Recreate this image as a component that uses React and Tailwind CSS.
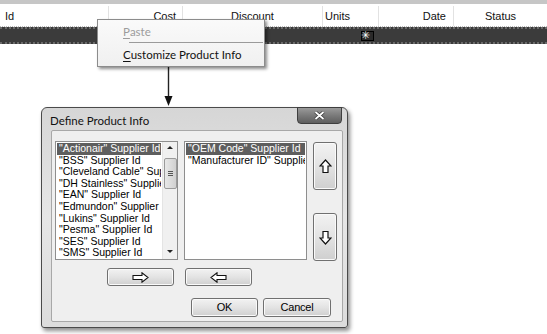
import React from 'react'

const leftItems = [
  '"Actionair" Supplier Id',
  '"BSS" Supplier Id',
  '"Cleveland Cable" Supplier Id',
  '"DH Stainless" Supplier Id',
  '"EAN" Supplier Id',
  '"Edmundon" Supplier Id',
  '"Lukins" Supplier Id',
  '"Pesma" Supplier Id',
  '"SES" Supplier Id',
  '"SMS" Supplier Id',
]

const rightItems = ['"OEM Code" Supplier Id', '"Manufacturer ID" Supplier Id']

const btn = 'flex items-center justify-center rounded-[3px] border border-[#707070] bg-gradient-to-b from-[#f2f2f2] via-[#e3e3e3] to-[#cfcfcf] shadow-[inset_0_0_0_1px_#fafafa]'

function ArrowUp({ down }) {
  return (
    <svg width="13" height="15" viewBox="0 0 13 15" className={down ? 'rotate-180' : ''}>
      <path d="M6.5 1 L12 7 L9 7 L9 13.5 L4 13.5 L4 7 L1 7 Z" fill="#fff" stroke="#111" strokeWidth="1.2" strokeLinejoin="miter" />
    </svg>
  )
}

function ArrowSide({ left }) {
  return (
    <svg width="17" height="11" viewBox="0 0 17 11" className={left ? 'rotate-180' : ''}>
      <path d="M1 3.5 H10 V0.8 L16 5.5 L10 10.2 V7.5 H1 Z" fill="#fff" stroke="#111" strokeWidth="1.1" />
    </svg>
  )
}

function ListBox({ items, scroll }) {
  return (
    <div className="relative h-[119px] w-[123px] overflow-hidden border border-[#8e8e8e] bg-white">
      <div className={`pt-[1px] pl-[1px] ${scroll ? 'pr-[16px]' : 'pr-[1px]'}`}>
        {items.map((t, i) => (
          <div
            key={t}
            className={`h-[11.6px] whitespace-nowrap overflow-hidden pl-[2px] text-[10.5px] leading-[11.6px] ${i === 0 ? 'bg-[#5e5e5e] text-white' : 'text-black'}`}
          >
            {t}
          </div>
        ))}
      </div>
      {scroll && (
        <div className="absolute right-0 top-0 flex h-full w-[15px] flex-col items-center bg-[#f0f0f0] border-l border-[#e4e4e4]">
          <div className="mt-[4px] h-0 w-0 border-x-[3px] border-b-[3px] border-x-transparent border-b-[#222]" />
          <div className="mt-[9px] flex h-[31px] w-[13px] flex-col items-center justify-center gap-[1px] rounded-[2px] border border-[#9a9a9a] bg-gradient-to-r from-[#e8e8e8] to-[#d0d0d0]">
            <div className="h-[1px] w-[5px] bg-[#555]" />
            <div className="h-[1px] w-[5px] bg-[#555]" />
            <div className="h-[1px] w-[5px] bg-[#555]" />
          </div>
          <div className="mt-auto mb-[6px] h-0 w-0 border-x-[3px] border-t-[3px] border-x-transparent border-t-[#222]" />
        </div>
      )}
    </div>
  )
}

export default function App() {
  return (
    <div className="relative h-[334px] w-[547px] overflow-hidden bg-white text-black" style={{ fontFamily: '"Liberation Sans", Arial, sans-serif' }}>
      {/* grid header */}
      <div className="h-[4px] bg-[#c6c6c6]" />
      <div className="flex h-[23px] pt-[2px] text-[11px] text-[#111] border-b border-dotted border-[#bbb]">
        <div className="flex w-[109px] items-center pl-[5px] border-r border-[#e2e2e2]">Id</div>
        <div className="flex w-[74px] items-center justify-end pr-[6px] border-r border-[#e2e2e2]">Cost</div>
        <div className="flex w-[140px] items-center justify-center border-r border-[#e2e2e2]">Discount</div>
        <div className="flex w-[56px] items-center pl-[2px] border-r border-[#e2e2e2]">Units</div>
        <div className="flex w-[75px] items-center justify-end pr-[7px] border-r border-[#e2e2e2]">Date</div>
        <div className="flex flex-1 items-center justify-center">Status</div>
      </div>
      <div className="relative h-[17px] bg-[#3b3b3b] border-y-2 border-dotted border-[#6a6a6a]">
        <div className="absolute left-[361px] top-[2px] h-[10px] w-[13px] border border-black bg-[#2a2a2a]">
          <span className="absolute left-[-1px] top-[-4px] text-[11px] leading-[14px] text-white">✳</span>
        </div>
      </div>

      {/* dialog */}
      <div className="relative ml-[41px] mt-[63px] h-[221px] w-[307px] rounded-t-[6px] rounded-b-[3px] border border-[#4a4a4a] bg-gradient-to-b from-[#d6d6d6] via-[#e6e6e6] to-[#dcdcdc] shadow-[2px_3px_4px_rgba(0,0,0,0.45)]">
        <div className="flex h-[22px] items-center pl-[8px] pt-[3px] text-[11.5px] text-[#111]" style={{ fontFamily: 'Lato, "Liberation Sans", sans-serif' }}>Define Product Info</div>
        <div className="absolute right-[5px] top-[-1px] flex h-[17px] w-[45px] items-center justify-center rounded-b-[4px] border border-[#3e3e3e] bg-gradient-to-b from-[#9a9a9a] via-[#7a7a7a] to-[#5e5e5e]">
          <svg width="11" height="9" viewBox="0 0 11 9">
            <path d="M1.5 1 L9.5 8 M9.5 1 L1.5 8" stroke="#333" strokeWidth="3.2" />
            <path d="M1.5 1 L9.5 8 M9.5 1 L1.5 8" stroke="#fff" strokeWidth="1.8" />
          </svg>
        </div>
        <div className="ml-[9px] h-[192px] w-[292px] rounded-[2px] border border-[#a8a8a8] bg-[#efefef] pl-[3px] pt-[10px]">
          <div className="flex gap-[6px]">
            <ListBox items={leftItems} scroll />
            <ListBox items={rightItems} />
            <div className="flex flex-col gap-[23px] pt-[1px]">
              <div className={`${btn} h-[48px] w-[24px]`}><ArrowUp /></div>
              <div className={`${btn} h-[48px] w-[24px]`}><ArrowUp down /></div>
            </div>
          </div>
          <div className="mt-[7px] ml-[52px] flex gap-[11px]">
            <div className={`${btn} h-[18px] w-[67px]`}><ArrowSide /></div>
            <div className={`${btn} h-[18px] w-[67px]`}><ArrowSide left /></div>
          </div>
          <div className="mt-[12px] ml-[136px] flex gap-[5px] text-[11px] tracking-[-0.2px]">
            <div className={`${btn} h-[19px] w-[67px]`}>OK</div>
            <div className={`${btn} h-[19px] w-[68px]`}>Cancel</div>
          </div>
        </div>
      </div>

      {/* connector arrow */}
      <svg className="absolute left-[163px] top-[66px]" width="11" height="41" viewBox="0 0 11 41">
        <line x1="5.5" y1="0" x2="5.5" y2="32" stroke="#222" strokeWidth="1.4" />
        <path d="M1.5 30 L9.5 30 L5.5 40 Z" fill="#111" />
      </svg>

      {/* context menu */}
      <div className="absolute left-[97px] top-[19px] h-[48px] w-[168px] border border-[#8c8c8c] bg-gradient-to-b from-[#fafafa] to-[#f0f0f0] shadow-[2px_2px_3px_rgba(0,0,0,0.45)] text-[11.5px]" style={{ fontFamily: 'Lato, "Liberation Sans", sans-serif' }}>
        <div className="flex h-[22px] items-center pl-[25px] pt-[2px] text-[#9c9c9c]"><span className="underline underline-offset-2">P</span>aste</div>
        <div className="ml-[31px] mr-[1px] h-[1px] bg-[#9a9a9a]" />
        <div className="flex h-[24px] items-center pl-[25px] text-[#111]"><span className="underline underline-offset-2">C</span>ustomize Product Info</div>
      </div>
    </div>
  )
}
